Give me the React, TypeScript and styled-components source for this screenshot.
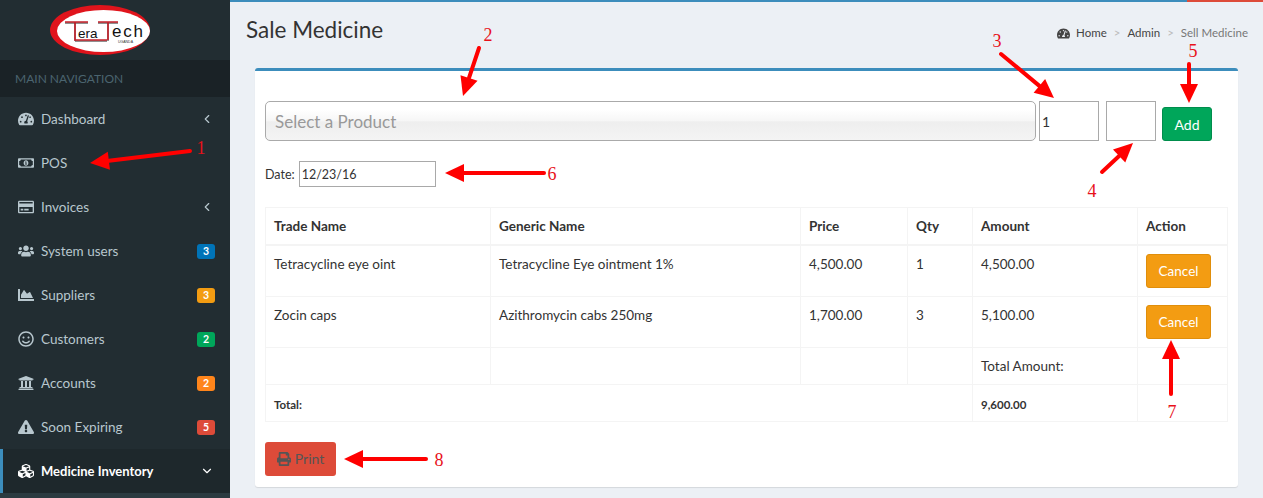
import * as React from 'react';
import styled, { createGlobalStyle } from 'styled-components';
import {
    FaChartArea,
    FaCubes,
    FaExclamationTriangle,
    FaPrint,
    FaRegCreditCard,
    FaRegMoneyBillAlt,
    FaRegSmile,
    FaTachometerAlt,
    FaUniversity,
    FaUsers,
} from 'react-icons/fa';
import { FiChevronDown, FiChevronLeft } from 'react-icons/fi';

const GlobalStyle = createGlobalStyle`
html, body {
    margin: 0;
    padding: 0;
    height: 498px;
    overflow: hidden;
    background: #ecf0f5;
    font-family: Lato, "Liberation Sans", sans-serif;
    font-size: 14px;
    color: #333;
}
* { box-sizing: border-box; }
`;

const Page = styled.div`
position: relative;
display: flex;
width: 1263px;
height: 498px;
overflow: hidden;
`;

const Sidebar = styled.aside`
flex: 0 0 230px;
height: 498px;
background: #222d32;
overflow: hidden;
`;

const LogoBar = styled.div`
height: 60px;
display: flex;
align-items: center;
justify-content: center;
padding-right: 30px;
`;

const NavHeader = styled.div`
height: 37px;
padding: 0 15px;
display: flex;
align-items: center;
background: #1a2226;
color: #4b646f;
font-size: 12px;
`;

const NavItem = styled.div<{ $active?: boolean }>`
height: 44px;
display: flex;
align-items: center;
padding: 0 15px 0 ${(p) => (p.$active ? '15px' : '18px')};
border-left: ${(p) => (p.$active ? '3px solid #3c8dbc' : 'none')};
background: ${(p) => (p.$active ? '#1e282c' : 'transparent')};
color: ${(p) => (p.$active ? '#fff' : '#b8c7ce')};
font-weight: ${(p) => (p.$active ? 700 : 400)};
font-size: ${(p) => (p.$active ? '13px' : '13.5px')};
`;

const NavIcon = styled.span`
width: 23px;
display: flex;
align-items: center;
font-size: 16px;
`;

const NavLabel = styled.span`
flex: 1;
`;

const Badge = styled.span<{ $color: string }>`
width: 18px;
height: 15px;
border-radius: 3px;
background: ${(p) => p.$color};
color: #fff;
font-size: 10.5px;
font-weight: 700;
display: flex;
align-items: center;
justify-content: center;
`;

const Caret = styled.span`
display: flex;
font-size: 14px;
margin-right: 1px;
`;

const SubMenu = styled.div`
height: 5px;
background: #2c3b41;
`;

const Main = styled.main`
flex: 1;
min-width: 0;
`;

const TopStripe = styled.div`
height: 2px;
display: flex;
`;

const StripeBlue = styled.div`
flex: 0 0 957px;
background: #3c8dbc;
`;

const StripeRed = styled.div`
flex: 1;
background: #dd4b39;
`;

const ContentHeader = styled.header`
height: 66px;
padding: 14px 15px 0 16px;
display: flex;
justify-content: space-between;
align-items: flex-start;
`;

const Title = styled.h1`
margin: 0;
font-size: 22.5px;
font-weight: 400;
line-height: 28px;
color: #333;
`;

const Breadcrumb = styled.ol`
list-style: none;
margin: 10px 0 0;
padding: 0;
display: flex;
align-items: center;
font-size: 11.5px;
line-height: 14px;
color: #444;
`;

const Crumb = styled.li<{ $current?: boolean }>`
display: flex;
align-items: center;
color: ${(p) => (p.$current ? '#777' : '#444')};
`;

const CrumbSep = styled.li`
color: #bbb;
margin: 0 7px;
`;

const CrumbIcon = styled.span`
display: flex;
font-size: 13px;
margin-right: 6px;
`;

const Box = styled.section`
width: 983px;
height: 419px;
margin-left: 25px;
padding: 30px 10px 0;
background: #fff;
border-top: 3px solid #3c8dbc;
border-radius: 3px;
box-shadow: 0 1px 1px rgba(0, 0, 0, 0.1);
`;

const ProductRow = styled.div`
display: flex;
align-items: flex-end;
height: 40px;
`;

const ProductSelect = styled.div`
width: 771px;
height: 40px;
padding-left: 9px;
display: flex;
align-items: center;
border: 1px solid #aaa;
border-radius: 5px;
background: linear-gradient(#fff 20%, #f6f6f6 50%, #eee 52%, #f4f4f4 100%);
color: #999;
font-size: 17px;
`;

const BoxInput = styled.input<{ $width: number; $left: number }>`
width: ${(p) => p.$width}px;
height: 40px;
margin: 0 0 0 ${(p) => p.$left}px;
padding: 0 2px;
border: 1px solid #a9a9a9;
border-radius: 0;
background: #fff;
color: #333;
font: inherit;
font-size: 14px;
outline: none;
`;

const DateInput = styled(BoxInput)`
height: 26px;
font-size: 12.5px;
`;

const AddButton = styled.button`
width: 50px;
height: 34px;
margin-left: 6px;
border: 1px solid #008d4c;
border-radius: 3px;
background: #00a65a;
color: #fff;
font: inherit;
font-size: 14px;
`;

const DateRow = styled.div`
height: 26px;
margin-top: 20px;
display: flex;
align-items: center;
font-size: 12.5px;
`;

const Grid = styled.table`
width: 963px;
margin-top: 20px;
table-layout: fixed;
border-collapse: collapse;
border: 1px solid #f4f4f4;
font-size: 13.5px;
`;

const Th = styled.th<{ $width: number }>`
width: ${(p) => p.$width}px;
height: 37px;
padding: 0 8px;
text-align: left;
font-weight: 700;
border: 1px solid #f4f4f4;
border-bottom-width: 2px;
`;

const Td = styled.td<{ $height?: number; $strong?: boolean }>`
height: ${(p) => p.$height ?? 51}px;
padding: ${(p) => (p.$strong ? '10px 8px 6px' : '8px')};
vertical-align: top;
border: 1px solid #f4f4f4;
line-height: 20px;
font-weight: ${(p) => (p.$strong ? 700 : 400)};
font-size: ${(p) => (p.$strong ? '11.5px' : 'inherit')};
`;

const CancelButton = styled.button`
display: block;
width: 65px;
height: 34px;
margin: 0;
border: 1px solid #e08e0b;
border-radius: 3px;
background: #f39c12;
color: #fff;
font: inherit;
font-size: 13.5px;
`;

const PrintButton = styled.button`
width: 71px;
height: 34px;
margin-top: 20px;
padding: 0;
display: flex;
align-items: center;
justify-content: center;
gap: 4px;
border: none;
border-radius: 3px;
background: #dd4b39;
color: #555;
font: inherit;
font-size: 14px;
`;

const Overlay = styled.svg`
position: absolute;
left: 0;
top: 0;
pointer-events: none;
`;

const Mark = styled.text`
font-family: "Liberation Serif", serif;
font-size: 18px;
fill: #e8111a;
text-anchor: middle;
`;

const Arrow = ({ from, to }: { from: [number, number]; to: [number, number] }) => {
    const dx = to[0] - from[0];
    const dy = to[1] - from[1];
    const len = Math.hypot(dx, dy);
    const ux = dx / len;
    const uy = dy / len;
    const bx = to[0] - ux * 19;
    const by = to[1] - uy * 19;
    const head = `${to[0]},${to[1]} ${bx - uy * 9},${by + ux * 9} ${bx + uy * 9},${by - ux * 9}`;
    return (
        <g>
            <line x1={from[0]} y1={from[1]} x2={bx} y2={by} stroke="#f00" strokeWidth={4} strokeLinecap="round" />
            <polygon points={head} fill="#f00" />
        </g>
    );
};

const Logo = () => (
    <svg width="100" height="50" viewBox="0 0 100 50">
        <ellipse cx="50" cy="25" rx="50" ry="25" fill="#e0141c" />
        <ellipse cx="53.5" cy="26" rx="46.5" ry="21" fill="#fff" />
        <path d="M15 18H38M25 18V36H57M48 18H68M58 18V36" fill="none" stroke="#222" strokeWidth="1" />
        <path d="M15 17H38M25 17V35H57M48 17H68M58 17V35" fill="none" stroke="#c5202a" strokeWidth="1.6" />
        <text x="28" y="33" fontFamily="Liberation Sans, sans-serif" fontSize="13.5" fill="#111">era</text>
        <text x="62" y="32" fontFamily="Liberation Sans, sans-serif" fontSize="17" fill="#111" textLength="31">ech</text>
        <text x="68" y="38" fontFamily="Liberation Sans, sans-serif" fontSize="3.5" fill="#333">UGANDA</text>
    </svg>
);

interface INavLink {
    label: string;
    icon: React.ReactNode;
    badge?: string;
    color?: string;
    caret?: boolean;
}

const links: INavLink[] = [
    { label: 'Dashboard', icon: <FaTachometerAlt />, caret: true },
    { label: 'POS', icon: <FaRegMoneyBillAlt /> },
    { label: 'Invoices', icon: <FaRegCreditCard />, caret: true },
    { label: 'System users', icon: <FaUsers />, badge: '3', color: '#0073b7' },
    { label: 'Suppliers', icon: <FaChartArea />, badge: '3', color: '#f39c12' },
    { label: 'Customers', icon: <FaRegSmile />, badge: '2', color: '#00a65a' },
    { label: 'Accounts', icon: <FaUniversity />, badge: '2', color: '#ff851b' },
    { label: 'Soon Expiring', icon: <FaExclamationTriangle />, badge: '5', color: '#dd4b39' },
];

const sales = [
    { trade: 'Tetracycline eye oint', generic: 'Tetracycline Eye ointment 1%', price: '4,500.00', qty: '1', amount: '4,500.00' },
    { trade: 'Zocin caps', generic: 'Azithromycin cabs 250mg', price: '1,700.00', qty: '3', amount: '5,100.00' },
];

const arrows: { from: [number, number]; to: [number, number] }[] = [
    { from: [190, 151], to: [90, 163] },
    { from: [479, 48], to: [463, 96] },
    { from: [1001, 54], to: [1054, 98] },
    { from: [1102, 172], to: [1133, 143] },
    { from: [1189, 64], to: [1189, 103] },
    { from: [544, 173], to: [445, 173] },
    { from: [1171, 394], to: [1171, 340] },
    { from: [426, 459], to: [344, 459] },
];

const marks: [string, number, number][] = [
    ['1', 201, 154],
    ['2', 488, 41],
    ['3', 997, 47],
    ['4', 1092, 197],
    ['5', 1193, 57],
    ['6', 552, 180],
    ['7', 1172, 418],
    ['8', 439, 466],
];

export default function App() {
    return (
        <Page>
            <GlobalStyle />
            <Sidebar>
                <LogoBar><Logo /></LogoBar>
                <NavHeader>MAIN NAVIGATION</NavHeader>
                {links.map((link) => (
                    <NavItem key={link.label}>
                        <NavIcon>{link.icon}</NavIcon>
                        <NavLabel>{link.label}</NavLabel>
                        {link.badge && <Badge $color={link.color as string}>{link.badge}</Badge>}
                        {link.caret && <Caret><FiChevronLeft /></Caret>}
                    </NavItem>
                ))}
                <NavItem $active={true}>
                    <NavIcon><FaCubes /></NavIcon>
                    <NavLabel>Medicine Inventory</NavLabel>
                    <Caret><FiChevronDown /></Caret>
                </NavItem>
                <SubMenu />
            </Sidebar>
            <Main>
                <TopStripe>
                    <StripeBlue />
                    <StripeRed />
                </TopStripe>
                <ContentHeader>
                    <Title>Sale Medicine</Title>
                    <Breadcrumb>
                        <Crumb><CrumbIcon><FaTachometerAlt /></CrumbIcon>Home</Crumb>
                        <CrumbSep>&gt;</CrumbSep>
                        <Crumb>Admin</Crumb>
                        <CrumbSep>&gt;</CrumbSep>
                        <Crumb $current={true}>Sell Medicine</Crumb>
                    </Breadcrumb>
                </ContentHeader>
                <Box>
                    <ProductRow>
                        <ProductSelect>Select a Product</ProductSelect>
                        <BoxInput $width={60} $left={3} defaultValue="1" />
                        <BoxInput $width={50} $left={7} />
                        <AddButton>Add</AddButton>
                    </ProductRow>
                    <DateRow>
                        Date:
                        <DateInput $width={137} $left={4} defaultValue="12/23/16" />
                    </DateRow>
                    <Grid>
                        <thead>
                            <tr>
                                <Th $width={225}>Trade Name</Th>
                                <Th $width={310}>Generic Name</Th>
                                <Th $width={107}>Price</Th>
                                <Th $width={65}>Qty</Th>
                                <Th $width={165}>Amount</Th>
                                <Th $width={90}>Action</Th>
                            </tr>
                        </thead>
                        <tbody>
                            {sales.map((sale) => (
                                <tr key={sale.trade}>
                                    <Td>{sale.trade}</Td>
                                    <Td>{sale.generic}</Td>
                                    <Td>{sale.price}</Td>
                                    <Td>{sale.qty}</Td>
                                    <Td>{sale.amount}</Td>
                                    <Td><CancelButton>Cancel</CancelButton></Td>
                                </tr>
                            ))}
                            <tr>
                                <Td $height={37} />
                                <Td $height={37} />
                                <Td $height={37} />
                                <Td $height={37} />
                                <Td $height={37}>Total Amount:</Td>
                                <Td $height={37} />
                            </tr>
                            <tr>
                                <Td $height={37} $strong={true} colSpan={4}>Total:</Td>
                                <Td $height={37} $strong={true}>9,600.00</Td>
                                <Td $height={37} />
                            </tr>
                        </tbody>
                    </Grid>
                    <PrintButton><FaPrint />Print</PrintButton>
                </Box>
            </Main>
            <Overlay width="1263" height="498" viewBox="0 0 1263 498">
                {arrows.map((arrow, index) => <Arrow key={index} from={arrow.from} to={arrow.to} />)}
                {marks.map(([label, x, y]) => <Mark key={label} x={x} y={y}>{label}</Mark>)}
            </Overlay>
        </Page>
    );
}
